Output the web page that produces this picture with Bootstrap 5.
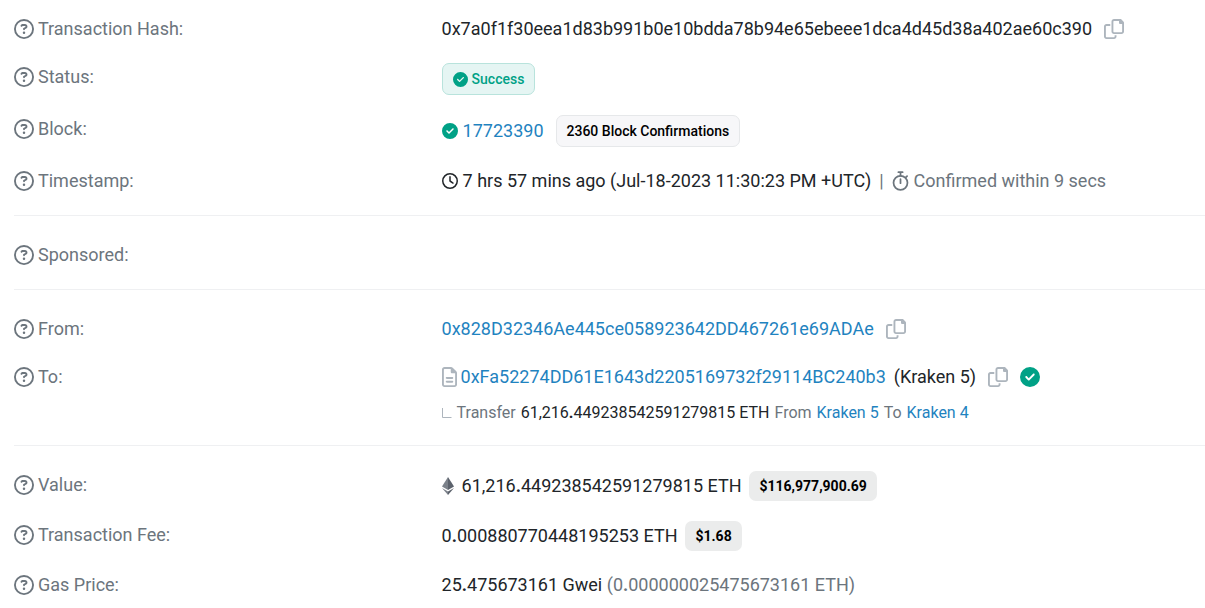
<!DOCTYPE html>
<html lang="en">
<head>
<meta charset="utf-8">
<meta name="viewport" content="width=device-width, initial-scale=1">
<title>Transaction Details</title>
<link href="https://cdn.jsdelivr.net/npm/bootstrap@5.3.0/dist/css/bootstrap.min.css" rel="stylesheet">
<style>
  body { font-family: Roboto, "Liberation Sans", sans-serif; font-size: 18px; line-height: 28px; color: #212529; background: #fff; }
  a { color: #1f83c0; text-decoration: none; }
  svg { display: block; flex: none; fill: currentColor; }
  .tx-sheet { padding: 15px 0 10px 14px; }
  .tx-group { display: grid; gap: 20px; }
  .tx-group + .tx-group { border-top: 1px solid #eff0f2; margin-top: 20px; padding-top: 25px; }
  .tx-row { display: flex; flex-wrap: wrap; margin: 0; }
  .tx-row dt { flex: 0 0 35.9%; display: flex; align-items: center; align-self: flex-start; gap: 4px; font-weight: 400; color: #6c757d; }
  .tx-row dd { flex: 1 1 0; min-width: 0; margin: 0; }
  .tx-tall { min-height: 32px; }
  .tx-mid { min-height: 30px; }
  .muted { color: #6c757d; }
  .ok { color: #00a186; }
  .pale { color: #adb5bd; }
  .copy-btn { border: 0; padding: 0; background: none; color: #adb5bd; margin-left: 12px; }
  .lead-icon { margin-right: 5px; }
  .pill { font-size: 14px; line-height: 20px; font-weight: 500; border-radius: 7px; padding: 5px 10px; border: 1px solid #e6e8ea; background: #f7f7f9; color: #000; }
  .pill-side { margin-left: 12px; }
  .pill-ok { background: #e5f5f3; border-color: #b8e3dc; color: #00a186; }
  .pill-usd { background: #ebecec; border: 0; font-weight: 700; margin-left: 8px; }
  .transfer { font-size: 16px; line-height: 24px; margin-top: 10px; gap: 5px; }
  @media (max-width: 767px) { .tx-row dt, .tx-row dd { flex: 0 0 100%; overflow-wrap: anywhere; } }
</style>
</head>
<body>
<svg width="0" height="0" class="position-absolute" aria-hidden="true">
  <symbol id="help" viewBox="0 0 512 512"><path d="M464 256A208 208 0 1 0 48 256a208 208 0 1 0 416 0zM0 256a256 256 0 1 1 512 0A256 256 0 1 1 0 256zm169.8-90.7c7.9-22.3 29.1-37.3 52.8-37.3h58.3c34.9 0 63.1 28.3 63.1 63.1c0 22.6-12.1 43.5-31.7 54.8L280 264.4c-.2 13-10.9 23.6-24 23.6c-13.3 0-24-10.7-24-24V250.5c0-8.6 4.6-16.5 12.1-20.8l44.3-25.4c4.7-2.7 7.6-7.7 7.6-13.1c0-8.4-6.8-15.1-15.1-15.1H222.6c-3.4 0-6.4 2.1-7.5 5.3l-.4 1.2c-4.4 12.5-18.2 19-30.6 14.6s-19-18.2-14.6-30.6l.4-1.2zM224 352a32 32 0 1 1 64 0 32 32 0 1 1 -64 0z"/></symbol>
  <symbol id="check" viewBox="0 0 512 512"><path d="M256 512A256 256 0 1 0 256 0a256 256 0 1 0 0 512zM369 209L241 337c-9.4 9.4-24.6 9.4-33.9 0l-64-64c-9.4-9.4-9.4-24.6 0-33.9s24.6-9.4 33.9 0l47 47L335 175c9.4-9.4 24.6-9.4 33.9 0s9.4 24.6 0 33.9z"/></symbol>
  <symbol id="clock" viewBox="0 0 512 512"><path d="M464 256A208 208 0 1 1 48 256a208 208 0 1 1 416 0zM0 256a256 256 0 1 0 512 0A256 256 0 1 0 0 256zM232 120V256c0 8 4 15.5 10.7 20l96 64c11 7.4 25.9 4.4 33.3-6.7s4.4-25.9-6.7-33.3L280 243.2V120c0-13.3-10.7-24-24-24s-24 10.7-24 24z"/></symbol>
  <symbol id="copy" viewBox="0 0 512 512"><path d="M502.6 70.6l-61.3-61.2C435.4 3.4 427.2 0 418.7 0H256c-35.3 0-64 28.7-64 64v256c0 35.4 28.7 64 64 64h192c35.2 0 64-28.8 64-64V93.3c0-8.5-3.4-16.7-9.4-22.7zM464 320c0 8.8-7.2 16-16 16H256c-8.8 0-16-7.2-16-16V64c0-8.8 7.2-16 16-16h128v48c0 17.7 14.3 32 32 32h48V320zM272 448c0 8.8-7.2 16-16 16H64c-8.8 0-16-7.2-16-16V192c0-8.8 7.2-16 16-16h96v-48H64c-35.3 0-64 28.7-64 64v256c0 35.3 28.7 64 64 64h192c35.2 0 64-28.8 64-64v-32h-48z"/></symbol>
  <symbol id="doc" viewBox="0 0 384 512"><path d="M64 464c-8.8 0-16-7.2-16-16V64c0-8.8 7.2-16 16-16H224v80c0 17.7 14.3 32 32 32h80V448c0 8.8-7.2 16-16 16H64zM64 0C28.7 0 0 28.7 0 64V448c0 35.3 28.7 64 64 64H320c35.3 0 64-28.7 64-64V154.5c0-17-6.7-33.3-18.7-45.3L274.7 18.7C262.7 6.7 246.5 0 229.5 0H64zm56 256c-13.3 0-24 10.7-24 24s10.7 24 24 24H264c13.3 0 24-10.7 24-24s-10.7-24-24-24H120zm0 96c-13.3 0-24 10.7-24 24s10.7 24 24 24H264c13.3 0 24-10.7 24-24s-10.7-24-24-24H120z"/></symbol>
  <symbol id="watch" viewBox="0 0 448 512"><g fill="none" stroke="currentColor" stroke-width="46" stroke-linecap="round"><circle cx="224" cy="304" r="184"/><path d="M168 24h112M224 24v90M224 208v104M356 170l42-42"/></g></symbol>
  <symbol id="eth" viewBox="0 0 12 20"><path fill="#7b818a" d="M6 1L0 10.500l6 3.500z"/><path fill="#5c626c" d="M6 1l6 9.500L6 14z"/><path fill="#7b818a" d="M0 12l6 3.500V19z"/><path fill="#5c626c" d="M12 12l-6 3.500V19z"/></symbol>
</svg>
<main class="tx-sheet">
  <dl class="tx-group mb-0">
    <div class="tx-row">
      <dt><svg width="20" height="20"><use href="#help"/></svg>Transaction Hash:</dt>
      <dd class="d-flex align-items-center"><span>0x7a0f1f30eea1d83b991b0e10bdda78b94e65ebeee1dca4d45d38a402ae60c390</span><button class="copy-btn" type="button" aria-label="Copy hash"><svg width="20" height="20"><use href="#copy"/></svg></button></dd>
    </div>
    <div class="tx-row tx-tall">
      <dt><svg width="20" height="20"><use href="#help"/></svg>Status:</dt>
      <dd class="d-flex align-items-center"><span class="pill pill-ok d-flex align-items-center gap-1"><svg width="15" height="15"><use href="#check"/></svg>Success</span></dd>
    </div>
    <div class="tx-row tx-tall">
      <dt><svg width="20" height="20"><use href="#help"/></svg>Block:</dt>
      <dd class="d-flex align-items-center"><svg class="ok lead-icon" width="16" height="16"><use href="#check"/></svg><a href="#block">17723390</a><span class="pill pill-side">2360 Block Confirmations</span></dd>
    </div>
    <div class="tx-row">
      <dt><svg width="20" height="20"><use href="#help"/></svg>Timestamp:</dt>
      <dd class="d-flex align-items-center"><svg class="lead-icon" width="16" height="16"><use href="#clock"/></svg><span>7 hrs 57 mins ago (Jul-18-2023 11:30:23 PM +UTC)</span><span class="muted mx-2">|</span><svg class="muted lead-icon" width="17" height="20"><use href="#watch"/></svg><span class="muted">Confirmed within 9 secs</span></dd>
    </div>
  </dl>
  <dl class="tx-group mb-0">
    <div class="tx-row"><dt><svg width="20" height="20"><use href="#help"/></svg>Sponsored:</dt><dd></dd></div>
  </dl>
  <dl class="tx-group mb-0">
    <div class="tx-row">
      <dt><svg width="20" height="20"><use href="#help"/></svg>From:</dt>
      <dd class="d-flex align-items-center"><a href="#from">0x828D32346Ae445ce058923642DD467261e69ADAe</a><button class="copy-btn" type="button" aria-label="Copy sender"><svg width="20" height="20"><use href="#copy"/></svg></button></dd>
    </div>
    <div class="tx-row">
      <dt><svg width="20" height="20"><use href="#help"/></svg>To:</dt>
      <dd>
        <div class="d-flex align-items-center"><svg class="pale me-1" width="15" height="20"><use href="#doc"/></svg><a href="#to">0xFa52274DD61E1643d2205169732f29114BC240b3</a><span class="ms-2">(Kraken 5)</span><button class="copy-btn" type="button" aria-label="Copy recipient"><svg width="20" height="20"><use href="#copy"/></svg></button><svg class="ok pill-side" width="20" height="20"><use href="#check"/></svg></div>
        <div class="transfer d-flex flex-wrap align-items-center muted"><svg class="pale" width="10" height="10" viewBox="0 0 10 10"><path fill="none" stroke="currentColor" d="M.5 0v9.500h9"/></svg><span>Transfer</span><span class="text-body">61,216<b>.</b>449238542591279815 ETH</span><span>From</span><a href="#k5">Kraken 5</a><span>To</span><a href="#k4">Kraken 4</a></div>
      </dd>
    </div>
  </dl>
  <dl class="tx-group mb-0">
    <div class="tx-row tx-mid">
      <dt><svg width="20" height="20"><use href="#help"/></svg>Value:</dt>
      <dd class="d-flex align-items-center"><svg class="me-2" width="12" height="20"><use href="#eth"/></svg><span>61,216<b>.</b>449238542591279815 ETH</span><span class="pill pill-usd">$116,977,900.69</span></dd>
    </div>
    <div class="tx-row tx-mid">
      <dt><svg width="20" height="20"><use href="#help"/></svg>Transaction Fee:</dt>
      <dd class="d-flex align-items-center"><span>0<b>.</b>000880770448195253 ETH</span><span class="pill pill-usd">$1.68</span></dd>
    </div>
    <div class="tx-row">
      <dt><svg width="20" height="20"><use href="#help"/></svg>Gas Price:</dt>
      <dd>25<b>.</b>475673161 Gwei <span class="muted">(0<b>.</b>000000025475673161 ETH)</span></dd>
    </div>
  </dl>
</main>
<script src="https://cdn.jsdelivr.net/npm/bootstrap@5.3.0/dist/js/bootstrap.bundle.min.js"></script>
</body>
</html>
